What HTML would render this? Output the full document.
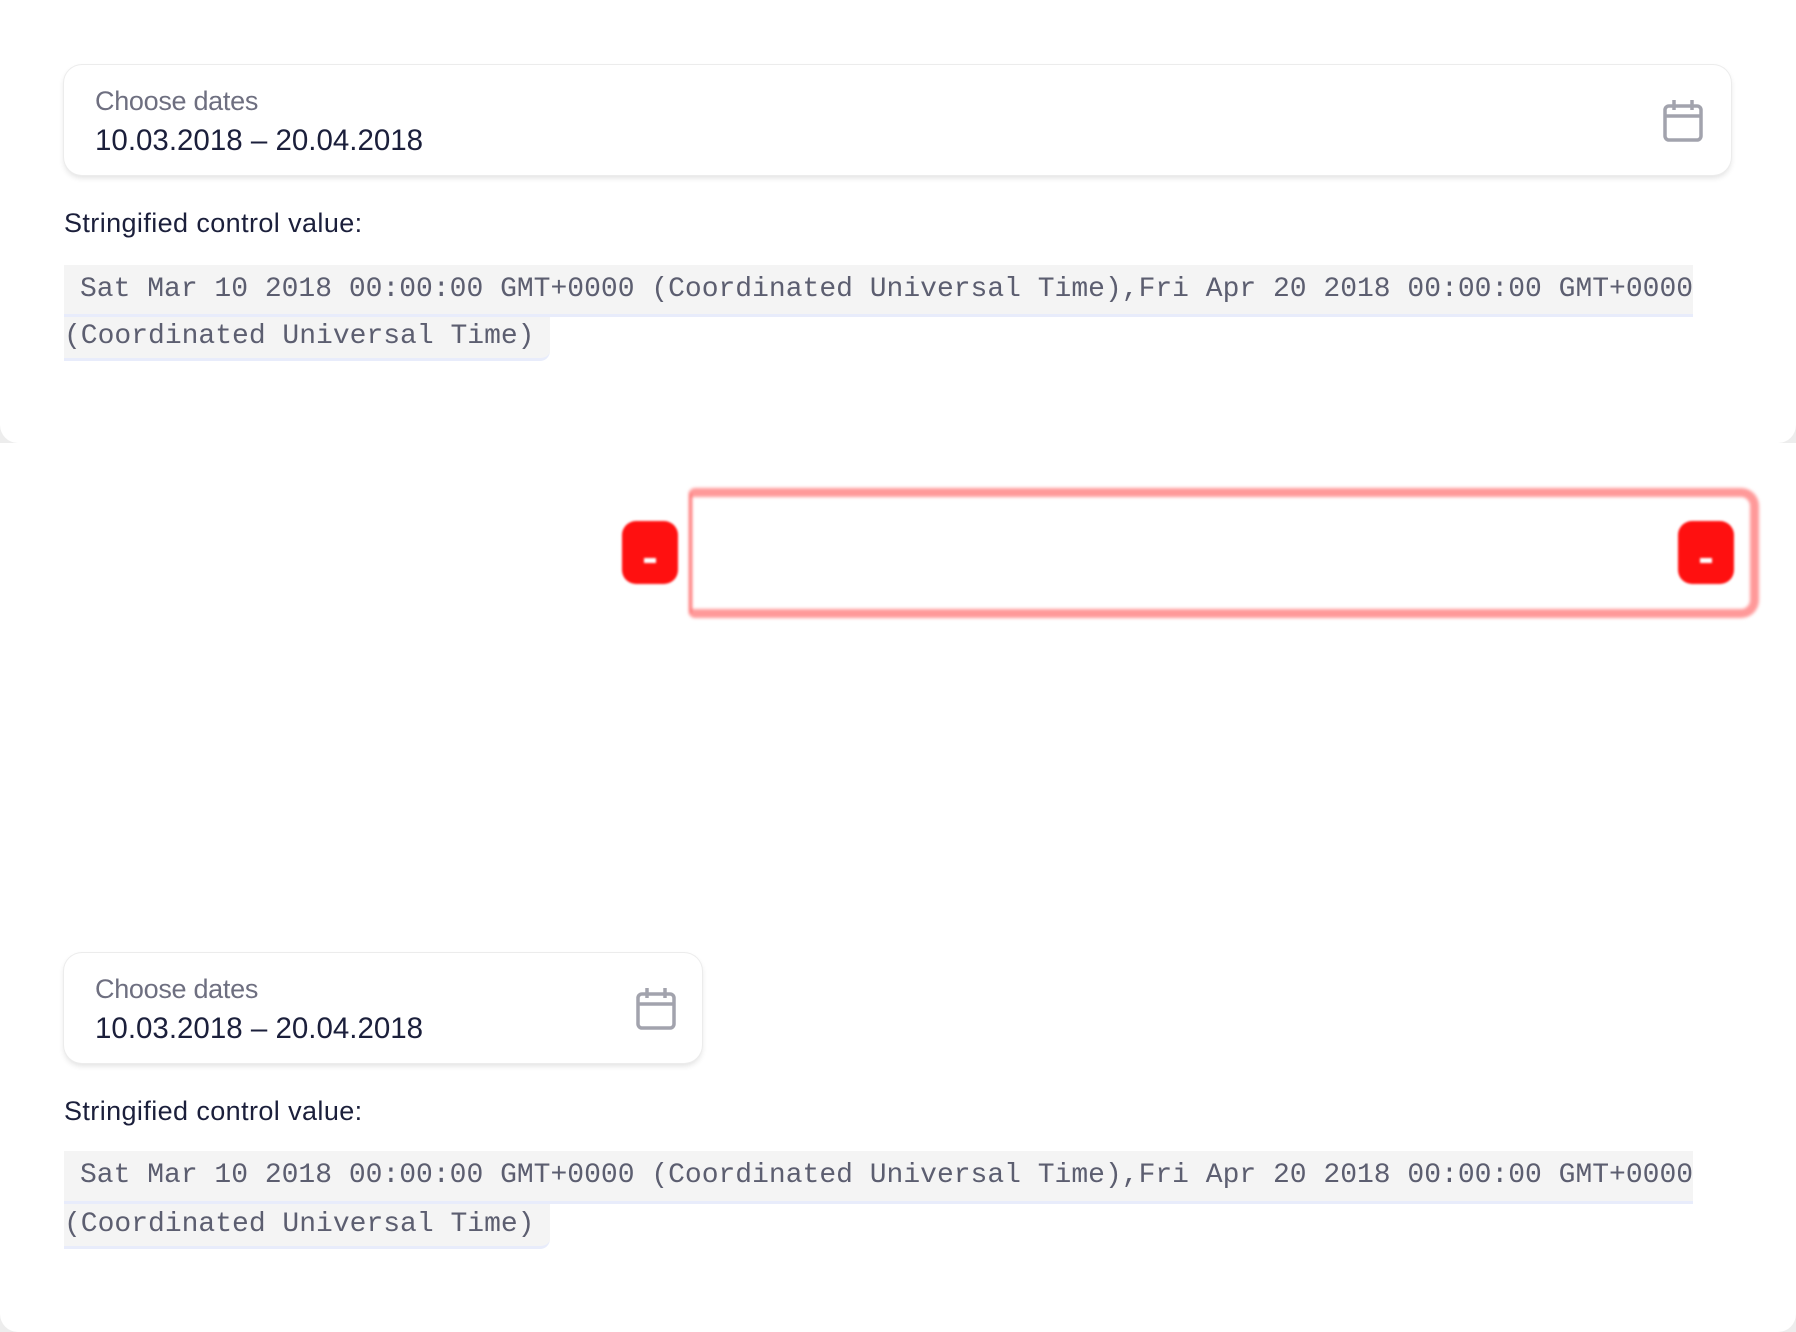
<!DOCTYPE html>
<html><head><meta charset="utf-8"><style>
html,body{margin:0;padding:0}
body{width:1796px;height:1332px;position:relative;background:#ededed;overflow:hidden;font-family:"Liberation Sans",sans-serif}
.panel{position:absolute;left:0;width:1796px;background:#fff}
.card{position:absolute;background:#fff;border-radius:18px;box-shadow:0 0 0 1px #ececec,0 3px 6px rgba(0,0,0,0.12)}
.lbl{position:absolute;left:31px;font-size:27px;color:#6e6f80;letter-spacing:-0.3px}
.val{position:absolute;left:31px;font-size:29.5px;color:#1b1f3b}
.ico{position:absolute}
.str{position:absolute;left:64px;font-size:27px;color:#1b1f3b;letter-spacing:0.4px}
.cl{position:absolute;left:64px;font-family:"Liberation Mono",monospace;font-size:28px;line-height:49px;color:#5c5e70;background:#f4f4f4;border-bottom:3px solid #e8ecfb;white-space:pre;box-sizing:border-box}
</style></head><body>
<div class="panel" style="top:0;height:443px;border-radius:0 0 18px 18px"></div>
<div class="panel" style="top:443px;height:889px;border-radius:0 0 18px 18px"></div>

<div class="card" style="left:64px;top:65px;width:1667px;height:110px">
<div class="lbl" style="top:21px">Choose dates</div>
<div class="val" style="top:59px">10.03.2018 – 20.04.2018</div>
<svg class="ico" style="left:1598px;top:33px" width="42" height="46" viewBox="0 0 42 46"><rect x="3" y="8" width="36" height="34" rx="4" fill="none" stroke="#a2a3ad" stroke-width="3.5"/><line x1="3" y1="18" x2="39" y2="18" stroke="#a2a3ad" stroke-width="3.5"/><line x1="12" y1="2" x2="12" y2="12" stroke="#a2a3ad" stroke-width="3.5"/><line x1="30" y1="2" x2="30" y2="12" stroke="#a2a3ad" stroke-width="3.5"/></svg>
</div>
<div class="str" style="top:208px">Stringified control value:</div>
<div class="cl" style="top:265px;width:1629px;height:52px;padding-left:16px">Sat Mar 10 2018 00:00:00 GMT+0000 (Coordinated Universal Time),Fri Apr 20 2018 00:00:00 GMT+0000</div>
<div class="cl" style="top:317px;width:486px;height:44px;line-height:40px;border-radius:0 0 10px 0">(Coordinated Universal Time)</div>

<div style="position:absolute;left:622px;top:521px;width:56px;height:63px;background:#ff1010;border-radius:14px;filter:blur(1px)"><div style="position:absolute;left:22px;top:37px;width:12px;height:5px;background:#fff"></div></div>
<div style="position:absolute;left:689px;top:488px;width:1070px;height:130px;border:9px solid rgba(255,120,120,0.75);border-left:3px solid rgba(255,60,60,0.8);border-radius:6px 18px 18px 6px;filter:blur(1.5px);box-sizing:border-box"></div>
<div style="position:absolute;left:1678px;top:521px;width:56px;height:63px;background:#ff1010;border-radius:14px;filter:blur(1px)"><div style="position:absolute;left:22px;top:37px;width:12px;height:5px;background:#fff"></div></div>

<div class="card" style="left:64px;top:953px;width:638px;height:110px">
<div class="lbl" style="top:21px">Choose dates</div>
<div class="val" style="top:59px">10.03.2018 – 20.04.2018</div>
<svg class="ico" style="left:571px;top:33px" width="42" height="46" viewBox="0 0 42 46"><rect x="3" y="8" width="36" height="34" rx="4" fill="none" stroke="#a2a3ad" stroke-width="3.5"/><line x1="3" y1="18" x2="39" y2="18" stroke="#a2a3ad" stroke-width="3.5"/><line x1="12" y1="2" x2="12" y2="12" stroke="#a2a3ad" stroke-width="3.5"/><line x1="30" y1="2" x2="30" y2="12" stroke="#a2a3ad" stroke-width="3.5"/></svg>
</div>
<div class="str" style="top:1096px">Stringified control value:</div>
<div class="cl" style="top:1151px;width:1629px;height:53px;padding-left:16px">Sat Mar 10 2018 00:00:00 GMT+0000 (Coordinated Universal Time),Fri Apr 20 2018 00:00:00 GMT+0000</div>
<div class="cl" style="top:1204px;width:486px;height:45px;line-height:41px;border-radius:0 0 10px 0">(Coordinated Universal Time)</div>
</body></html>
